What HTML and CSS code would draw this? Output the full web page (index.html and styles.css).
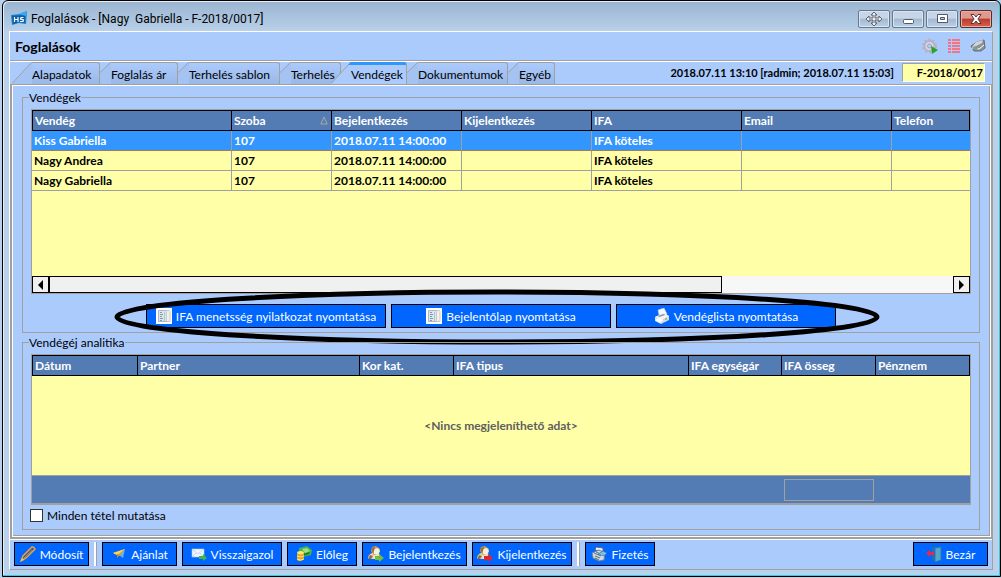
FILE: index.html
```html
<!DOCTYPE html>
<html lang="hu">
<head>
<meta charset="utf-8">
<title>Foglalások</title>
<link rel="stylesheet" href="styles.css">
</head>
<body>
<svg class="defs" aria-hidden="true">
  <symbol id="i-doc" viewBox="0 0 16 16"><path fill="#fff" d="M0 0h16v16H0z"/><path fill="#dce6f0" stroke="#a9b9c8" d="M2.500 2.500h9v11h-9z"/><path fill="#f4f1e8" stroke="#c5cbd0" d="M10.500 2.500h3l.5 1v10h-3.500z"/><path stroke="#8598aa" d="M4 4.500h2M4 6.500h3M4 8.500h2M4 10.500h3M4 12.500h2"/><path stroke="#b4c3d2" d="M8.500 4v9"/></symbol>
  <symbol id="i-guest" viewBox="0 0 16 16"><path fill="#e9d3a0" d="M0 13c0-4 2-5 4-6l6 0c2 1 3 3 3 6z"/><path fill="#d29a45" d="M4 1l4-1 4 3-1 5-5 1-3-4z"/><path fill="#f7f1e2" d="M6 3l4-1 2 3-2 4-4-1z"/><path fill="#9a6c38" d="M2 9l3 1-2 3H0zM4 2l3-1-1 4-2 1z"/><path fill="#eee9dc" d="M5 10l5-1 1 3-5 1z"/></symbol>
</svg>
<main class="window">
  <header class="titlebar">
    <svg class="app-logo" viewBox="0 0 16 16"><path fill="#1683cf" d="M0 4l9-1 7-3-1 13-7-1-7 2z"/><path fill="#0b5ea5" d="M1 5l13-1v8l-6-1-6 2z"/><path fill="#39a8ed" d="M7 3l9-3-1 5z"/><path stroke="#fff" stroke-width="1.200" fill="none" d="M3.500 6v5M7 6v5M3.500 8.500H7M12.500 6.500H10l-.5 1.500 3 1-.5 1.500H9"/></svg>
    <h1 class="title">Foglalások - [Nagy&nbsp; Gabriella - F-2018/0017]</h1>
    <div class="win-buttons">
      <button class="win-btn" aria-label="Áthelyezés"><svg width="20" height="16" viewBox="0 0 20 16"><path fill="#eee" stroke="#5c6470" d="M10 1l3 3h-2v3h4V5l3 3-3 3V9h-4v3h2l-3 3-3-3h2V9H5v2L2 8l3-3v2h4V4H7z"/></svg></button>
      <button class="win-btn" aria-label="Kis méret"><svg width="14" height="14" viewBox="0 0 14 14"><rect x="2.500" y="7.500" width="10" height="4" rx="1" fill="#fff" stroke="#50586a"/></svg></button>
      <button class="win-btn" aria-label="Teljes méret"><svg width="14" height="14" viewBox="0 0 14 14"><path fill="#fff" fill-rule="evenodd" stroke="#50586a" d="M2.500 2.500h10v8h-10zM5.500 5.500v2h4v-2z"/></svg></button>
      <button class="win-btn win-close" aria-label="Bezárás"><svg width="14" height="14" viewBox="0 0 14 14"><path fill="#fff" stroke="#5b3038" d="M2 2.500h3l2 2.500 2-2.500h3L9 7l3 4.500H9L7 9l-2 2.500H2L5 7z"/></svg></button>
    </div>
  </header>
  <div class="client">
    <div class="heading">
      <h2 class="heading-text">Foglalások</h2>
      <svg class="tool" viewBox="0 0 16 16"><circle cx="7.500" cy="8" r="5" fill="#d8d5e5" stroke="#b4b2c8" stroke-width="2"/><circle cx="7.500" cy="8" r="6.500" fill="none" stroke="#b3b1c8" stroke-width="2" stroke-dasharray="2.200 1.900"/><circle cx="7.500" cy="8" r="2" fill="#b4cdf2" stroke="#a3a1bb"/><path fill="#29a329" d="M9 8l7 4-6 4z"/></svg>
      <svg class="tool" viewBox="0 0 16 16"><path stroke="#f47482" stroke-width="2" d="M2 2h3M6 2h8M2 5h3M6 5h8M2 8h3M6 8h8M2 11h3M6 11h8M2 14h3M6 14h8"/></svg>
      <svg class="tool" viewBox="0 0 16 16"><path fill="#8d9295" stroke="#646b70" d="M1 8l6-4 7-2 1 8-4 3H4z"/><path fill="#d0d6d8" d="M6 4l7-2-1 3-6 3-4 1z"/><path stroke="#fff" fill="none" d="M2 10l7 1 5-4"/><path fill="#71a890" d="M3 9l5 1-1 2-4-1z"/></svg>
    </div>
    <div class="tabrow">
      <nav class="tabs" role="tablist">
        <button class="tab" role="tab"><svg class="slant-wide" viewBox="0 0 20 22"><path class="fill" d="M0 22L19.500.5H20V22z"/><path class="line" d="M0 21.500L19.500.5H20"/></svg><span class="tab-label">Alapadatok</span></button>
        <button class="tab" role="tab"><svg class="slant" viewBox="0 0 11 22"><path class="fill" d="M0 22V11L10.500.5H11V22z"/><path class="line" d="M0 10.500L10.500.5H11"/></svg><span class="tab-label">Foglalás ár</span></button>
        <button class="tab" role="tab"><svg class="slant" viewBox="0 0 11 22"><path class="fill" d="M0 22V11L10.500.5H11V22z"/><path class="line" d="M0 10.500L10.500.5H11"/></svg><span class="tab-label">Terhelés sablon</span></button>
        <button class="tab" role="tab"><svg class="slant" viewBox="0 0 11 22"><path class="fill" d="M0 22V11L10.500.5H11V22z"/><path class="line" d="M0 10.500L10.500.5H11"/></svg><span class="tab-label">Terhelés</span></button>
        <button class="tab tab-active" role="tab" aria-selected="true"><svg class="slant-wide" viewBox="0 0 20 22"><path class="fill" d="M0 22L19.500.5H20V22z"/><path class="line" d="M0 21.500L19.500.5H20"/><path fill="#3296fa" d="M17 3l2.500-3h.5v3z"/></svg><span class="tab-label">Vendégek</span></button>
        <button class="tab" role="tab"><svg class="slant" viewBox="0 0 11 22"><path class="fill" d="M0 22V11L10.500.5H11V22z"/><path class="line" d="M0 10.500L10.500.5H11"/></svg><span class="tab-label">Dokumentumok</span></button>
        <button class="tab" role="tab"><svg class="slant" viewBox="0 0 11 22"><path class="fill" d="M0 22V11L10.500.5H11V22z"/><path class="line" d="M0 10.500L10.500.5H11"/></svg><span class="tab-label">Egyéb</span></button>
      </nav>
      <span class="stamp">2018.07.11 13:10 [radmin; 2018.07.11 15:03]</span>
      <input class="code" aria-label="Foglalás száma" value="F-2018/0017">
    </div>
    <section class="page">
      <fieldset class="group">
        <legend>Vendégek</legend>
        <div class="grid-box guests">
          <table class="grid">
            <colgroup><col class="w200"><col class="w100"><col class="w130"><col class="w130"><col class="w150"><col class="w150"><col></colgroup>
            <thead><tr><th>Vendég</th><th><span class="sorted">Szoba<svg width="8" height="9" viewBox="0 0 8 9"><path fill="none" stroke="#aaa9a0" d="M4 1L.8 8h6.400z"/></svg></span></th><th>Bejelentkezés</th><th>Kijelentkezés</th><th>IFA</th><th>Email</th><th>Telefon</th></tr></thead>
            <tbody>
              <tr class="selected"><td>Kiss Gabriella</td><td>107</td><td>2018.07.11 14:00:00</td><td></td><td>IFA köteles</td><td></td><td></td></tr>
              <tr><td>Nagy Andrea</td><td>107</td><td>2018.07.11 14:00:00</td><td></td><td>IFA köteles</td><td></td><td></td></tr>
              <tr><td>Nagy Gabriella</td><td>107</td><td>2018.07.11 14:00:00</td><td></td><td>IFA köteles</td><td></td><td></td></tr>
            </tbody>
          </table>
          <div class="scrollbar">
            <button class="scroll-btn" aria-label="Balra"><svg width="5" height="10" viewBox="0 0 5 10"><path d="M5 0v10L0 5z"/></svg></button>
            <div class="track"><div class="thumb"></div></div>
            <button class="scroll-btn" aria-label="Jobbra"><svg width="5" height="10" viewBox="0 0 5 10"><path d="M0 0v10l5-5z"/></svg></button>
          </div>
        </div>
        <div class="print-row">
          <button class="btn w240"><svg class="icon"><use href="#i-doc"/></svg>IFA menetsség nyilatkozat nyomtatása</button>
          <button class="btn w220"><svg class="icon"><use href="#i-doc"/></svg>Bejelentőlap nyomtatása</button>
          <button class="btn w220"><svg class="icon" viewBox="0 0 16 16"><path fill="#f7fafc" stroke="#bcc8d2" stroke-width=".6" d="M5 7L4 2l6-2 3 6z"/><path fill="#d5dbe0" d="M1 9l9-4 5 3v4l-8 4-6-3z"/><path fill="#f1f3f4" d="M1 9l9-4 5 3-8 4z"/><path fill="#7e8b96" d="M4 8l6-2 1 1-6 2z"/><path fill="#fff" d="M1 12l4-2 4 2-3 3z"/><path fill="#58a84b" d="M11 11l2-1v1l-2 1z"/></svg>Vendéglista nyomtatása</button>
        </div>
        <svg class="marker" viewBox="0 0 766 56" preserveAspectRatio="none" aria-hidden="true"><ellipse cx="383" cy="28" rx="380" ry="25" fill="none" stroke="#000" stroke-width="5"/></svg>
      </fieldset>
      <fieldset class="group">
        <legend>Vendégéj analitika</legend>
        <div class="grid-box">
          <table class="grid">
            <colgroup><col class="w106"><col class="w222"><col class="w94"><col class="w235"><col class="w93"><col class="w94"><col></colgroup>
            <thead><tr><th>Dátum</th><th>Partner</th><th>Kor kat.</th><th>IFA tipus</th><th>IFA egységár</th><th>IFA össeg</th><th>Pénznem</th></tr></thead>
            <tbody><tr><td class="empty" colspan="7">&lt;Nincs megjeleníthető adat&gt;</td></tr></tbody>
            <tfoot><tr><td colspan="5"></td><td><div class="sum"></div></td><td></td></tr></tfoot>
          </table>
        </div>
        <label class="check"><input type="checkbox">Minden tétel mutatása</label>
      </fieldset>
    </section>
    <footer class="toolbar">
      <button class="btn w75"><svg class="icon" viewBox="0 0 16 16"><path fill="#245ab0" stroke="#e9a23a" stroke-width="1.500" d="M1 15l2-5 9-9q2-.5 3 2l-9 9z"/><path stroke="#b97b3a" d="M4 12l8-8"/><path fill="#f6c66c" d="M1 15l1-3 2 2z"/></svg>Módosít</button>
      <span class="sep"></span>
      <button class="btn w75"><svg class="icon" viewBox="0 0 16 16"><path fill="#f1a91f" d="M2 7l12-4-5 7z"/><path fill="#ffd45b" d="M2 7l12-4-8 6z"/><path fill="#6fb0da" d="M14 3l-2 9-4-3z"/><path fill="#d98514" d="M6 8l3 1-3 3z"/></svg>Ajánlat</button>
      <button class="btn w100"><svg class="icon" viewBox="0 0 16 16"><path fill="#eef5fc" stroke="#b5c9df" stroke-width=".6" d="M1 3h12v8H1z"/><path stroke="#c5d6e8" fill="none" d="M1 3l6 5 6-5M1 11l4-4M13 11L9 7"/><path fill="#42b649" d="M8 10h4V8l4 4-4 3v-2H8z"/></svg>Visszaigazol</button>
      <button class="btn w70"><svg class="icon" viewBox="0 0 16 16"><path fill="#49b34b" d="M3 2l8-2 5 4-1 5-8 2-4-4z"/><path fill="#a1e07a" d="M6 3l5-1 3 3-5 2z"/><path fill="#1b7c2d" d="M7 8l7-2-1 2-6 2z"/><ellipse cx="4.500" cy="7" rx="3.500" ry="2" fill="#ffe477"/><path fill="#e0a620" d="M1 7q4 3 7 0v6q-4 4-7 1z"/><path stroke="#ffe98c" d="M1 10q4 2 7 0M1 13q4 2 7 0" fill="none"/></svg>Előleg</button>
      <button class="btn w105"><svg class="icon" viewBox="0 0 16 16"><use href="#i-guest" width="16" height="16"/><path fill="#72bd3f" d="M7 10h4V8l5 4-5 4v-2H7z"/></svg>Bejelentkezés</button>
      <button class="btn w100"><svg class="icon" viewBox="0 0 16 16"><use href="#i-guest" width="16" height="16"/><path fill="#e3232e" d="M7 10h4V8l5 4-5 4v-2H7z"/></svg>Kijelentkezés</button>
      <span class="sep"></span>
      <button class="btn w70"><svg class="icon" viewBox="0 0 16 16"><path fill="#eef2f5" stroke="#526b86" d="M4 4l1-3 7 1v4z"/><path fill="#cfd9e2" stroke="#668097" d="M1 7l7-3 6 3-1 7-5 1-6-3z"/><path stroke="#5c7188" d="M3 7l7 3M5 6l7 3M4 10l5 2M4 12l4 2"/><path fill="#80bee9" stroke="#316a9d" stroke-width=".6" d="M7 8l5-3 4 2-3 3z"/></svg>Fizetés</button>
      <button class="btn w75 close"><svg class="icon" viewBox="0 0 16 16"><path fill="#286dad" d="M6 1h9v13H6z"/><path fill="#56a5cc" stroke="#237cae" d="M9 2l6-1v13l-6 2z"/><path fill="#e32b4c" d="M0 7l4-3v2h4v3H4v2z"/></svg>Bezár</button>
    </footer>
  </div>
</main>
</body>
</html>
```
FILE: styles.css
```css
* { box-sizing: border-box; }
body {
  margin: 0;
  background: #b9d1ea;
  color: #000;
  font: 12px/15px Lato, "Noto Sans", sans-serif;
}
button, input { font: inherit; color: inherit; margin: 0; }
h1, h2 { margin: 0; font-size: inherit; }
.defs { display: block; width: 0; height: 0; }

.window {
  display: flex;
  flex-direction: column;
  min-height: calc(100vh - 1px);
  margin-left: 2px;
  padding: 0 7px 6px 6px;
  border: 1px solid #000;
  border-radius: 6px 6px 0 0;
  background: linear-gradient(#9ab4d0, #b9d1ea 31px);
  box-shadow: inset -1px -1px #3cc7dc, inset 1px 1px #e5effa;
}
.titlebar { display: flex; align-items: center; height: 30px; padding: 6px 1px 0 2px; }
.app-logo { width: 16px; height: 16px; margin-right: 4px; }
.title { flex: 1; font: 12px/16px Roboto, sans-serif; }
.win-buttons { display: flex; gap: 2px; }
.win-btn {
  display: grid;
  place-items: center;
  width: 32px;
  height: 18px;
  padding: 0;
  border: 1px solid #68788c;
  border-radius: 2px;
  background: linear-gradient(#c6d5e7 45%, #a3b9d1 50%, #bdd0e5);
  box-shadow: inset 0 0 0 1px #d9e5f2;
}
.win-close { border-color: #5c2a30; background: linear-gradient(#dd9b8f 45%, #bd3b2b 50%, #d2624b); box-shadow: inset 0 0 0 1px #e4b0a6; }

.client {
  display: flex;
  flex: 1;
  flex-direction: column;
  border: 1px solid #a0a0a0;
  border-top-color: #fff;
  border-left-color: #fff;
  background: #abcbfd;
}
.heading { display: flex; align-items: center; gap: 8px; height: 29px; padding: 0 6px 0 5px; border-bottom: 1px solid #a0a0a0; }
.heading-text { flex: 1; font-size: 14px; }
.tool { width: 16px; height: 16px; }

.tabrow { display: flex; height: 23px; padding-right: 7px; border-top: 1px solid #fff; white-space: nowrap; }
.tabs { display: grid; flex: 1; grid-template-columns: 88px 78px 102px 61px 66px 101px 47px; padding-left: 2px; }
.tab { display: flex; padding: 0; border: 0; background: none; height: 22px; }
.tab-active { margin-left: -10px; z-index: 1; }
.slant { width: 11px; height: 22px; flex: none; }
.slant-wide { width: 20px; height: 22px; flex: none; }
.line { fill: none; stroke: #a0a0a0; }
.fill { fill: #a4c3f2; }
.tab-label {
  flex: 1;
  height: 22px;
  padding-top: 4px;
  border: 1px solid #a0a0a0;
  border-width: 1px 1px 0 0;
  border-radius: 0 3px 0 0;
  background: linear-gradient(#abcbfd, #9ab8e6);
  text-align: left;
}
.tab-active .tab-label { padding-top: 2px; border-top: 3px solid #3296fa; background: #abcbfd; }
.tab-active .fill { fill: #abcbfd; }
.stamp { padding: 3px 8px 0 0; font-size: 11px; font-weight: bold; }
.code {
  width: 83px;
  height: 19px;
  margin-top: 1px;
  padding: 0 1px;
  border: 1px solid #a0a0a0;
  border-right-color: #fff;
  border-bottom-color: #fff;
  background: #ffffa8;
  font-size: 11px;
  font-weight: bold;
  text-align: right;
}

.page {
  display: flex;
  flex: 1;
  flex-direction: column;
  gap: 2px;
  padding: 5px 11px 7px 10px;
  border: 2px solid #a0a0a0;
  border-top-width: 1px;
  border-right-width: 1px;
  box-shadow: inset 1px 1px #fff, inset -1px -1px #fff, inset -2px -2px #a0a0a0;
}
.group { position: relative; min-width: 0; margin: 0; padding: 4px 8px; border: 1px solid #a0a0a0; }
.group legend { height: 15px; padding: 0; margin-left: -2px; }
.grid-box { border: 1px solid #a0a0a0; background: #ffffa8; }
.guests { display: flex; flex-direction: column; height: 185px; }

.grid { width: 100%; border-spacing: 0; table-layout: fixed; font-weight: bold; white-space: nowrap; }
.grid th { height: 21px; padding: 0 3px 0 2px; border: 1px solid #000; border-left-width: 0; background: #537bb4; color: #fff; text-align: left; }
.grid th:first-child { border-left-width: 1px; }
.grid td { height: 20px; padding: 0 2px; border: 1px solid #a0a0a0; border-width: 0 1px 1px 0; }
.grid tr td:last-child { border-right: 0; }
.grid .selected td { border-bottom-color: #a67a58; background: #3296fe; color: #fff; }
.grid .empty { height: 100px; color: #606060; text-align: center; }
.grid tfoot td { height: 28px; padding: 2px; border-right: 0; border-bottom: 1px solid #a0a0a0; background: #537bb4; }
.sum { height: 22px; border: 1px solid #a0a0a0; }
.sorted { display: flex; align-items: center; justify-content: space-between; }
.w70 { width: 70px; }
.w75 { width: 75px; }
.w93 { width: 93px; }
.w94 { width: 94px; }
.w100 { width: 100px; }
.w105 { width: 105px; }
.w106 { width: 106px; }
.w130 { width: 130px; }
.w150 { width: 150px; }
.w200 { width: 200px; }
.w220 { width: 220px; }
.w222 { width: 222px; }
.w235 { width: 235px; }
.w240 { width: 240px; }

.scrollbar { display: flex; height: 17px; margin-top: auto; background: #f7f7f7; }
.scroll-btn { display: grid; place-items: center; width: 17px; padding: 0; border: 1px solid #000; background: #f0f0f0; }
.track { flex: 1; }
.thumb { width: 74.4%; height: 17px; border: 1px solid #000; background: #f0f0f0; }

.print-row { display: flex; gap: 5px; padding: 10px 0 0 115px; }
.btn {
  display: flex;
  flex: none;
  align-items: center;
  justify-content: center;
  gap: 4px;
  height: 24px;
  padding: 0;
  border: 1px solid #000;
  background: #0066ff;
  color: #fff;
  white-space: nowrap;
}
.icon { width: 16px; height: 16px; flex: none; }
.marker { position: absolute; top: 184px; left: 91px; width: 766px; height: 56px; pointer-events: none; }

.check { display: flex; align-items: center; gap: 4px; height: 20px; margin-left: -1px; }
.check input { appearance: none; width: 13px; height: 13px; border: 1px solid #333; background: #fff; }
.check input:checked { background: #0066ff; }

.toolbar { display: flex; gap: 5px; height: 30px; padding: 2px 4px; border-top: 1px solid #fff; }
.sep { width: 3px; margin: 0 0 1px; border-left: 2px solid #fff; border-right: 1px solid #a0a0a0; }
.close { margin-left: auto; }
```
